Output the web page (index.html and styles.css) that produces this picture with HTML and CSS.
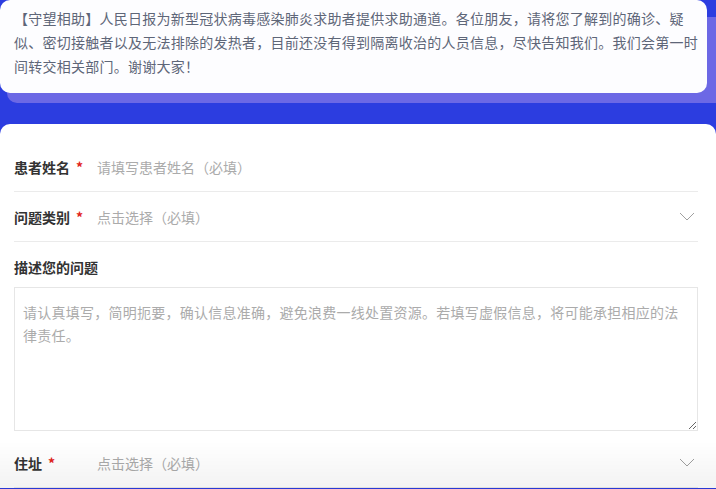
FILE: index.html
```html
<!DOCTYPE html>
<html lang="zh-CN">
<head>
  <meta charset="utf-8">
  <title>求助通道</title>
  <link rel="stylesheet" href="styles.css">
</head>
<body>
<div class="page">
  <div class="notice">
    <div class="notice-card">
      【守望相助】人民日报为新型冠状病毒感染肺炎求助者提供求助通道。各位朋友，请将您了解到的确诊、疑似、密切接触者以及无法排除的发热者，目前还没有得到隔离收治的人员信息，尽快告知我们。我们会第一时间转交相关部门。谢谢大家！
    </div>
  </div>

  <form class="help-form">
    <div class="form-row">
      <label class="row-label" for="patientName">患者姓名<span class="required">*</span></label>
      <input class="row-input" type="text" id="patientName" placeholder="请填写患者姓名（必填）">
    </div>

    <div class="form-row picker">
      <span class="row-label">问题类别<span class="required">*</span></span>
      <span class="row-placeholder">点击选择（必填）</span>
      <svg class="chevron" viewBox="0 0 16 9" fill="none" stroke="currentColor" stroke-width="1">
        <polyline points="1,1 8,8 15,1"/>
      </svg>
    </div>

    <div class="form-block">
      <label class="block-label" for="problem">描述您的问题</label>
      <textarea id="problem" class="problem-text" placeholder="请认真填写，简明扼要，确认信息准确，避免浪费一线处置资源。若填写虚假信息，将可能承担相应的法律责任。"></textarea>
    </div>

    <div class="form-row picker">
      <span class="row-label">住址<span class="required">*</span></span>
      <span class="row-placeholder">点击选择（必填）</span>
      <svg class="chevron" viewBox="0 0 16 9" fill="none" stroke="currentColor" stroke-width="1">
        <polyline points="1,1 8,8 15,1"/>
      </svg>
    </div>
  </form>
</div>
<div class="bottom-fade"></div>
</body>
</html>
```

FILE: styles.css
```css
:root {
  --brand-blue: #2c3de0;
  --brand-purple: #6c68e5;
  --label-color: #333333;
  --placeholder-color: #ababab;
  --line-color: #ebebeb;
  --notice-text: #5e6678;
}

html, body {
  margin: 0;
  padding: 0;
}

body {
  background-color: var(--brand-blue);
  font-family: "Noto Sans CJK SC", "Noto Sans", sans-serif;
  font-size: 14px;
  color: var(--label-color);
  height: 489px;
  overflow: hidden;
}

.notice {
  position: relative;
  margin-right: 9px;
}

.notice::before {
  content: "";
  position: absolute;
  left: 7px;
  right: -30px;
  top: 17px;
  bottom: -10px;
  background-color: var(--brand-purple);
  border-radius: 10px;
}

.notice-card {
  position: relative;
  background-color: #fdfdff;
  border-radius: 10px;
  padding: 6px 8px 15px 14px;
  line-height: 24px;
  letter-spacing: 0.25px;
  color: var(--notice-text);
}

.help-form {
  margin-top: 31px;
  background-color: #ffffff;
  border-radius: 10px 10px 0 0;
  padding: 18px 18px 0 14px;
}

.form-row {
  display: flex;
  align-items: center;
  height: 49px;
  border-bottom: 1px solid var(--line-color);
}

.row-label {
  width: 83px;
  flex-shrink: 0;
  font-weight: 600;
  color: var(--label-color);
}

.required {
  color: #e2231a;
  margin-left: 6px;
  font-weight: 600;
}

.row-input {
  flex: 1;
  border: none;
  outline: none;
  padding: 0;
  font-family: inherit;
  font-size: 14px;
  color: var(--label-color);
  background: transparent;
}

.row-input::placeholder,
.problem-text::placeholder {
  color: var(--placeholder-color);
}

.row-placeholder {
  flex: 1;
  color: var(--placeholder-color);
}

.chevron {
  width: 16px;
  height: 9px;
  margin-right: 3px;
  color: #a0a0a0;
}

.form-block {
  padding-top: 15px;
  margin-bottom: 7px;
}

.block-label {
  display: block;
  line-height: 20px;
  font-weight: 600;
  color: var(--label-color);
  margin-bottom: 10px;
}

.problem-text {
  display: block;
  box-sizing: border-box;
  width: 100%;
  height: 144px;
  margin: 0;
  padding: 13px 12px 13px 8px;
  border: 1px solid #e6e6e6;
  border-radius: 0;
  font-family: inherit;
  font-size: 14px;
  line-height: 23px;
  letter-spacing: 0.25px;
  color: var(--label-color);
  outline: none;
}

.bottom-fade {
  position: fixed;
  left: 0;
  right: 0;
  bottom: 0;
  height: 48px;
  background: linear-gradient(to bottom, rgba(0, 0, 0, 0), rgba(0, 0, 0, 0.05));
  pointer-events: none;
}
```
